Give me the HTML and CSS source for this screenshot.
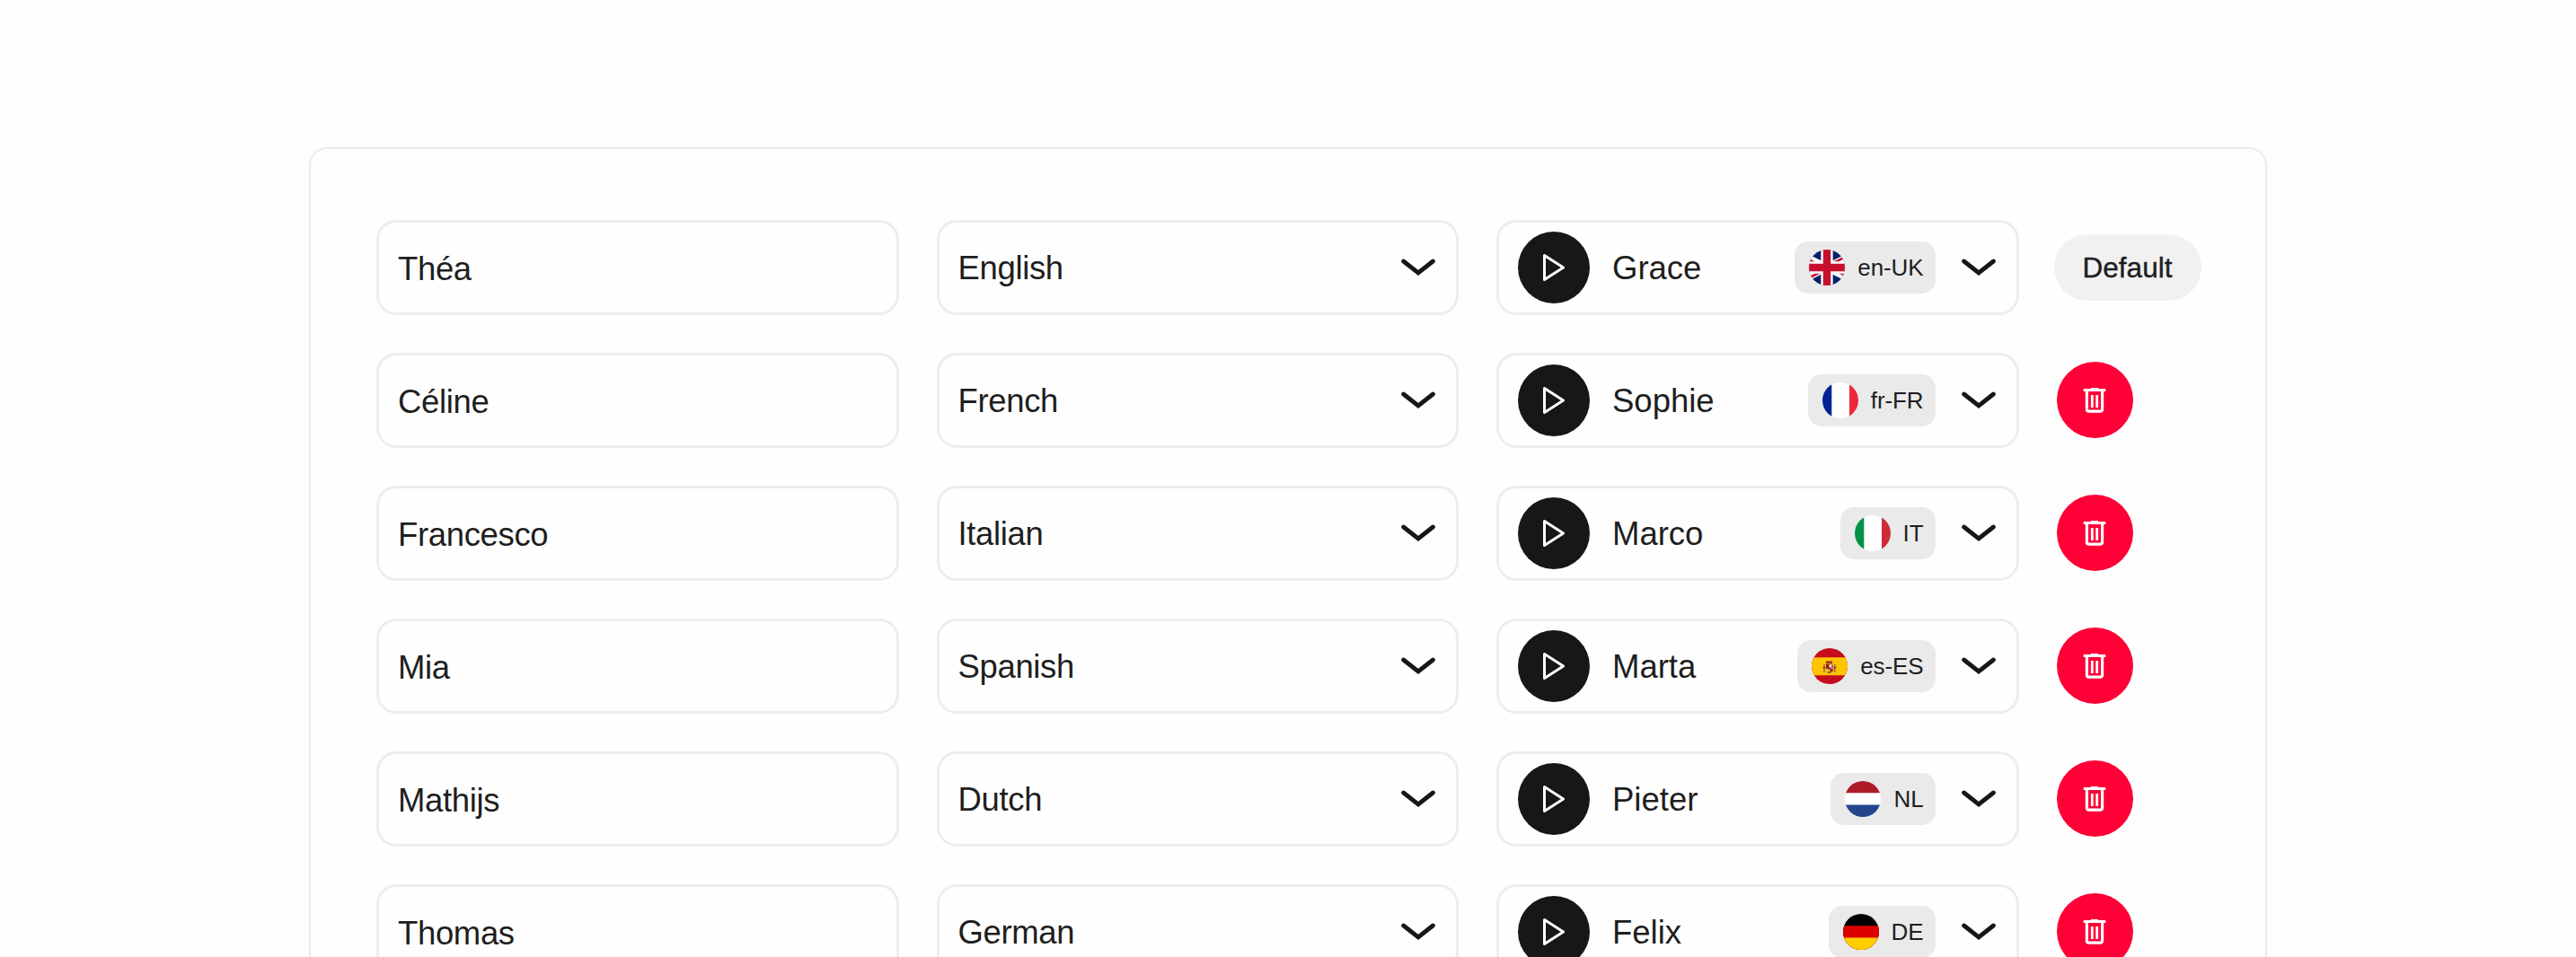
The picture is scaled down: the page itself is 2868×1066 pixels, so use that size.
FILE: index.html
```html
<!DOCTYPE html>
<html lang="en">
<head>
<meta charset="utf-8">
<title>Voices</title>
<link rel="stylesheet" href="styles.css">
</head>
<body>
<svg class="defs" width="0" height="0" aria-hidden="true">
  <symbol id="chevron" viewBox="0 0 38 20"><path d="M2.6 3 19 16 35.4 3" fill="none" stroke="#171717" stroke-width="4.8" stroke-linecap="round" stroke-linejoin="miter"/></symbol>
  <symbol id="play" viewBox="0 0 28 32"><path d="M3.5 2.5V29.5L24.5 16Z" fill="none" stroke="#fff" stroke-width="3" stroke-linejoin="round"/></symbol>
  <symbol id="trash" viewBox="0 0 26 30"><path d="M.7 3.6H25.3M9 2.4H17" fill="none" stroke="#fff" stroke-width="3"/><path d="M4.4 4V25a2.200 2.200 0 0 0 2.200 2.200H19.400A2.200 2.200 0 0 0 21.600 25V4" fill="none" stroke="#fff" stroke-width="3.200"/><path d="M10.300 9V23M15.700 9V23" stroke="#fff" stroke-width="2.800"/></symbol>
  <symbol id="uk" viewBox="0 0 40 40"><rect width="40" height="40" fill="#012169"/><path d="M-20 0 60 40M60 0-20 40" stroke="#fff" stroke-width="8"/><path d="M-20 1.5 20 21.5M60 38.5 20 18.5M60-1.5 20 18.5M-20 41.5 20 21.5" stroke="#c8102e" stroke-width="2.6"/><path d="M20 0V40M0 20H40" stroke="#fff" stroke-width="13.3"/><path d="M20 0V40M0 20H40" stroke="#c8102e" stroke-width="8.4"/></symbol>
  <symbol id="fr" viewBox="0 0 40 40"><path fill="#fff" d="M0 0H40V40H0z"/><path fill="#002395" d="M0 0H10.300V40H0z"/><path fill="#ed2939" d="M30 0H40V40H30z"/></symbol>
  <symbol id="it" viewBox="0 0 40 40"><path fill="#fff" d="M0 0H40V40H0z"/><path fill="#009246" d="M0 0H10.300V40H0z"/><path fill="#ce2b37" d="M30 0H40V40H30z"/></symbol>
  <symbol id="es" viewBox="0 0 40 40"><path fill="#c60b1e" d="M0 0H40V40H0z"/><path fill="#ffc400" d="M0 10.200H40V30.200H0z"/><path fill="#ad1519" d="M16 14.500h7v2h-7zM16 18h3.500v5H16zM20.500 23h3.200v3h-3.200z"/><path fill="#8f6b4b" d="M16 16.500h7v1.500h-7zM13.300 18h1.500v9h-1.500zM25 18h1.500v9H25zM17.500 26h4.500v2h-4.500z"/><path fill="#fff" d="M20 18.500h1.800v4H20z"/><path fill="#c7517a" d="M22 18.500h2v4h-2z"/><path fill="#5b5b8c" d="M18.500 21h3v3h-3z"/><path fill="#ad1519" d="M12.500 21h3v1.300h-3zM24.500 21h3v1.300h-3z"/></symbol>
  <symbol id="nl" viewBox="0 0 40 40"><path fill="#fff" d="M0 0H40V40H0z"/><path fill="#ae1c28" d="M0 0H40V13.300H0z"/><path fill="#21468b" d="M0 26.500H40V40H0z"/></symbol>
  <symbol id="de" viewBox="0 0 40 40"><path d="M0 0H40V40H0z"/><path fill="#d00" d="M0 13.300H40V40H0z"/><path fill="#ffce00" d="M0 26.600H40V40H0z"/></symbol>
</svg>
<main class="card">
  <div class="row">
    <div class="field name">Théa</div>
    <div class="field select"><span class="label">English</span><svg class="chevron"><use href="#chevron"/></svg></div>
    <div class="field voice"><button class="play" aria-label="Play"><svg><use href="#play"/></svg></button><span class="label">Grace</span><span class="chip"><svg class="flag"><use href="#uk"/></svg>en-UK</span><svg class="chevron"><use href="#chevron"/></svg></div>
    <div class="action"><span class="badge">Default</span></div>
  </div>
  <div class="row">
    <div class="field name">Céline</div>
    <div class="field select"><span class="label">French</span><svg class="chevron"><use href="#chevron"/></svg></div>
    <div class="field voice"><button class="play" aria-label="Play"><svg><use href="#play"/></svg></button><span class="label">Sophie</span><span class="chip"><svg class="flag"><use href="#fr"/></svg>fr-FR</span><svg class="chevron"><use href="#chevron"/></svg></div>
    <div class="action"><button class="delete" aria-label="Delete"><svg><use href="#trash"/></svg></button></div>
  </div>
  <div class="row">
    <div class="field name">Francesco</div>
    <div class="field select"><span class="label">Italian</span><svg class="chevron"><use href="#chevron"/></svg></div>
    <div class="field voice"><button class="play" aria-label="Play"><svg><use href="#play"/></svg></button><span class="label">Marco</span><span class="chip"><svg class="flag"><use href="#it"/></svg>IT</span><svg class="chevron"><use href="#chevron"/></svg></div>
    <div class="action"><button class="delete" aria-label="Delete"><svg><use href="#trash"/></svg></button></div>
  </div>
  <div class="row">
    <div class="field name">Mia</div>
    <div class="field select"><span class="label">Spanish</span><svg class="chevron"><use href="#chevron"/></svg></div>
    <div class="field voice"><button class="play" aria-label="Play"><svg><use href="#play"/></svg></button><span class="label">Marta</span><span class="chip"><svg class="flag"><use href="#es"/></svg>es-ES</span><svg class="chevron"><use href="#chevron"/></svg></div>
    <div class="action"><button class="delete" aria-label="Delete"><svg><use href="#trash"/></svg></button></div>
  </div>
  <div class="row">
    <div class="field name">Mathijs</div>
    <div class="field select"><span class="label">Dutch</span><svg class="chevron"><use href="#chevron"/></svg></div>
    <div class="field voice"><button class="play" aria-label="Play"><svg><use href="#play"/></svg></button><span class="label">Pieter</span><span class="chip"><svg class="flag"><use href="#nl"/></svg>NL</span><svg class="chevron"><use href="#chevron"/></svg></div>
    <div class="action"><button class="delete" aria-label="Delete"><svg><use href="#trash"/></svg></button></div>
  </div>
  <div class="row">
    <div class="field name">Thomas</div>
    <div class="field select"><span class="label">German</span><svg class="chevron"><use href="#chevron"/></svg></div>
    <div class="field voice"><button class="play" aria-label="Play"><svg><use href="#play"/></svg></button><span class="label">Felix</span><span class="chip"><svg class="flag"><use href="#de"/></svg>DE</span><svg class="chevron"><use href="#chevron"/></svg></div>
    <div class="action"><button class="delete" aria-label="Delete"><svg><use href="#trash"/></svg></button></div>
  </div>
</main>
</body>
</html>
```
FILE: styles.css
```css
* { box-sizing: border-box; }

html, body {
  height: 100%;
  margin: 0;
  overflow: hidden;
}

body {
  padding-top: 164px;
  background: #fefefe;
  color: #1e1e1e;
  font-family: "Liberation Sans", Arial, sans-serif;
  font-size: 36.5px;
  letter-spacing: -0.35px;
}

.defs { display: block; }

.card {
  display: flex;
  flex-direction: column;
  gap: 42px;
  width: 2180px;
  height: 902px;
  margin: 0 auto;
  padding: 79px 70px 0 73px;
  border: 2px solid #ebebeb;
  border-bottom: 0;
  border-radius: 20px 20px 0 0;
  overflow: hidden;
}

.row {
  display: grid;
  grid-template-columns: repeat(3, 581.5px) 1fr;
  column-gap: 42px;
  height: 106px;
  flex: none;
}

.field {
  display: flex;
  align-items: center;
  padding: 0 23px 0 21px;
  border: 3px solid #ededed;
  border-radius: 22px;
  line-height: 42px;
}

.name { padding-top: 4px; }

.label {
  flex: 1;
  padding-top: 1px;
}

.voice .label { letter-spacing: 0; }

.chevron {
  flex: none;
  width: 38px;
  height: 20px;
  margin-bottom: 1px;
}

button {
  display: flex;
  align-items: center;
  justify-content: center;
  flex: none;
  padding: 0;
  border: 0;
  border-radius: 50%;
}

.play {
  width: 80px;
  height: 80px;
  margin: 0 25px 1px 0;
  background: #171717;
}

.play svg {
  width: 28px;
  height: 32px;
}

.chip {
  display: flex;
  align-items: center;
  height: 58px;
  margin-right: 29px;
  padding: 0 13px 0 16px;
  border-radius: 15px;
  background: #eaeaea;
  font-size: 26px;
  letter-spacing: -0.1px;
}

.flag {
  width: 40px;
  height: 40px;
  margin-right: 14px;
  border-radius: 50%;
}

.action {
  display: flex;
  align-items: center;
}

.badge {
  width: 164px;
  height: 74px;
  margin-left: -3px;
  border-radius: 37px;
  background: #f1f1f1;
  font-size: 31.5px;
  letter-spacing: 0;
  line-height: 75px;
  text-align: center;
  -webkit-text-stroke: 0.4px #1a1a1a;
}

.delete {
  width: 85px;
  height: 85px;
  margin-bottom: 1px;
  background: #ff0037;
}

.delete svg {
  width: 26px;
  height: 30px;
}
```
